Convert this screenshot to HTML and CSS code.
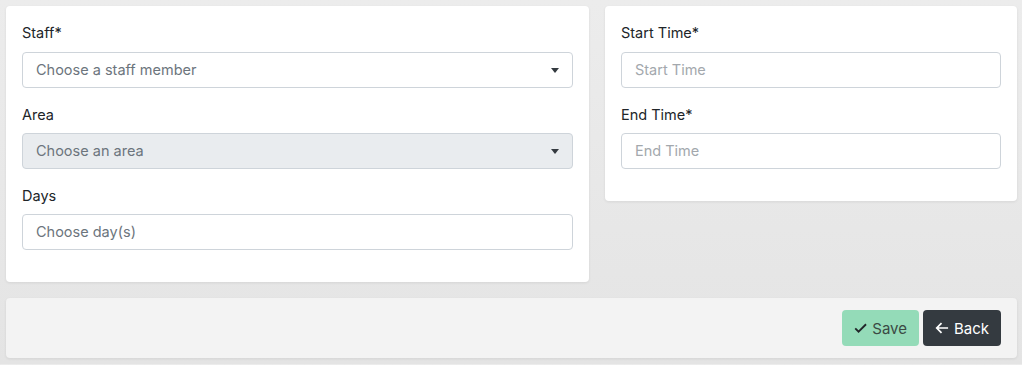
FILE: index.html
```html
<!DOCTYPE html>
<html lang="en">
    <head>
        <meta charset="UTF-8">
        <title>Rota entry</title>
        <link rel="stylesheet" href="styles.css">
    </head>
    <body>
        <div class="page">
            <div class="columns">
                <div class="card">
                    <div class="group">
                        <label>Staff*</label>
                        <div class="select"><span>Choose a staff member</span><i class="caret"></i></div>
                    </div>
                    <div class="group">
                        <label>Area</label>
                        <div class="select disabled"><span>Choose an area</span><i class="caret"></i></div>
                    </div>
                    <div class="group">
                        <label>Days</label>
                        <div class="select"><span>Choose day(s)</span></div>
                    </div>
                </div>
                <div class="card">
                    <div class="group">
                        <label for="start">Start Time*</label>
                        <input id="start" class="field" type="text" placeholder="Start Time">
                    </div>
                    <div class="group">
                        <label for="end">End Time*</label>
                        <input id="end" class="field" type="text" placeholder="End Time">
                    </div>
                </div>
            </div>
            <div class="actions">
                <button class="btn btn-save" disabled>
                    <svg viewBox="0 0 16 16" width="14" height="14"><path d="M1.5 8.5l4 4 9-9" fill="none" stroke="#212529" stroke-width="2.2"/></svg>
                    Save
                </button>
                <button class="btn btn-back">
                    <svg viewBox="0 0 16 16" width="14" height="14"><path d="M15 8H2M7.5 2.5L2 8l5.5 5.5" fill="none" stroke="#fff" stroke-width="2"/></svg>
                    Back
                </button>
            </div>
        </div>
    </body>
</html>
```

FILE: styles.css
```css
body {
    margin: 0;
    background: linear-gradient(180deg, #ececec 0%, #e4e4e4 100%);
    color: #212529;
    font-family: Inter, "Noto Sans", Arial, sans-serif;
    font-size: 14.5px;
}

.page {
    padding: 6px 5px 6px 6px;
}

.columns {
    display: grid;
    grid-template-columns: 583fr 412fr;
    gap: 16px;
    align-items: start;
}

.card {
    background: #fff;
    border-radius: 4px;
    padding: 16px 16px 0;
    box-shadow: 0 1px 3px rgba(0, 0, 0, 0.08);
}

.group {
    margin-bottom: 16px;
}

.card .group:last-child {
    margin-bottom: 32px;
}

.group label {
    display: block;
    line-height: 21px;
    margin-bottom: 9px;
    color: #212529;
}

.group + .group label {
    margin-bottom: 8px;
}

.select,
.field {
    box-sizing: border-box;
    width: 100%;
    height: 36px;
    border: 1px solid #ced4da;
    border-radius: 4px;
    background: #fff;
    padding: 0 13px 1px;
    font: inherit;
}

.select {
    display: flex;
    align-items: center;
    justify-content: space-between;
    color: #6c757d;
}

.select.disabled {
    background: #e9ecef;
}

.caret {
    width: 0;
    height: 0;
    border-left: 4px solid transparent;
    border-right: 4px solid transparent;
    border-top: 5px solid #343a40;
    margin-right: 0;
    margin-top: 2px;
}

.field {
    display: block;
    color: #212529;
    outline: 0;
}

.field::placeholder {
    color: #a3a8ad;
}

.actions {
    margin-top: 16px;
    background: #f3f3f3;
    border-radius: 4px;
    padding: 12px 16px;
    display: flex;
    justify-content: flex-end;
    gap: 4px;
    box-shadow: 0 1px 3px rgba(0, 0, 0, 0.08);
}

.btn {
    height: 36px;
    border: 0;
    border-radius: 4px;
    padding: 0 12px;
    font: inherit;
    font-size: 15px;
    display: flex;
    align-items: center;
    gap: 5px;
}

.btn-save {
    background: #94dbb8;
    color: #3b4a44;
    width: 77px;
}

.btn-back {
    background: #343a40;
    color: #fff;
    width: 78px;
    cursor: pointer;
}
```
